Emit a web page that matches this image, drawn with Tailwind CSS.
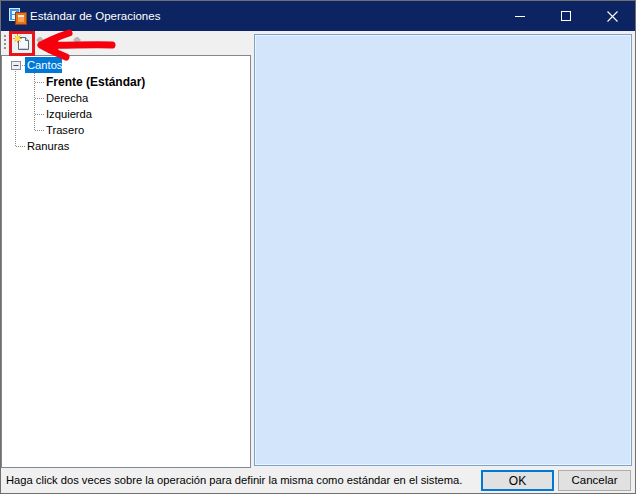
<!DOCTYPE html>
<html lang="es">
<head>
  <meta charset="UTF-8" />
  <title>Estándar de Operaciones</title>
  <script src="https://cdn.jsdelivr.net/npm/@tailwindcss/browser@4"></script>
</head>
<body class="m-0 bg-[#f0f0f0] font-['Liberation_Sans',sans-serif] text-[11.2px] text-black">
  <div class="relative w-[636px] h-[494px] flex flex-col border border-[#6f6f6f] overflow-hidden">
    <!-- Title bar -->
    <header class="h-[30px] shrink-0 bg-[#0c2461] flex items-center text-white">
      <svg class="ml-[8px] w-[18px] h-[18px]" viewBox="0 0 18 18">
        <rect x="0.5" y="1.5" width="10" height="12" fill="#3f9bea" stroke="#cfe8fc"/>
        <rect x="3" y="4" width="4" height="3" fill="#e8f4fe"/>
        <rect x="3" y="8" width="3" height="4" fill="#e8f4fe"/>
        <rect x="6.5" y="5.5" width="11" height="12" fill="#e8701a" stroke="#8a4312"/>
        <rect x="9" y="8" width="6" height="7" fill="#f5a45e"/>
        <rect x="9" y="8" width="6" height="2" fill="#fdeedd"/>
      </svg>
      <span class="ml-[3px] mt-[2px] text-[11.5px] leading-none">Estándar de Operaciones</span>
      <div class="ml-auto flex items-center">
        <div class="w-[46px] h-[30px] flex items-center justify-center">
          <div class="w-[10px] h-px bg-white"></div>
        </div>
        <div class="w-[46px] h-[30px] flex items-center justify-center">
          <div class="w-[10px] h-[10px] border border-white"></div>
        </div>
        <div class="w-[46px] h-[30px] flex items-center justify-center">
          <svg class="w-[11px] h-[11px]" viewBox="0 0 11 11"><path d="M.5.5l10 10M10.5.5l-10 10" stroke="#fff" stroke-width="1.1"/></svg>
        </div>
      </div>
    </header>

    <!-- Main area -->
    <div class="flex-1 flex min-h-0">
      <div class="w-[250px] shrink-0 flex flex-col">
        <!-- Toolbar -->
        <div class="h-[24px] shrink-0 flex items-center pl-[3px]">
          <div class="w-[2px] h-[16px] bg-[repeating-linear-gradient(to_bottom,#8f8f8f_0,#8f8f8f_2px,transparent_2px,transparent_4px)]"></div>
          <svg class="ml-[7px] w-[18px] h-[18px]" viewBox="0 0 18 18">
            <path d="M5.5 3.5h7l3 3v9h-10z" fill="#f4f7fb" stroke="#56697f"/>
            <path d="M12.5 3.5v3h3" fill="#cfd9e6" stroke="#56697f"/>
            <path d="M6.5 14.5h8" stroke="#c4d0de"/>
            <path d="M4.5 0v9M0 4.5h9M1.5 1.5l6 6M7.5 1.5l-6 6" stroke="#f39a12"/>
            <circle cx="4.5" cy="4.5" r="2.5" fill="#fbe04a"/>
          </svg>
          <svg class="ml-[5px] w-[8px] h-[6px] mb-[6px]" viewBox="0 0 8 6"><path d="M0 3l3-3h2l3 3-3 3H3z" fill="#b8b8b8"/></svg>
          <svg class="ml-[29px] w-[8px] h-[6px] mb-[6px]" viewBox="0 0 8 6"><path d="M0 3l3-3h2l3 3-3 3H3z" fill="#b8b8b8"/></svg>
        </div>
        <!-- Tree -->
        <div class="relative flex-1 bg-white border border-[#828790] pt-[1px]">
          <svg class="absolute left-[-1px] top-[-1px] w-[60px] h-[100px]" viewBox="0 0 60 100">
            <path d="M14.5 16v75.5H24M19 10.5h5M33.5 18v57M34 27.5h10M34 43.5h10M34 59.5h10M34 75.5h10" fill="none" stroke="#8a8a8a" stroke-dasharray="1 1"/>
            <rect x="10.5" y="6.5" width="9" height="8" fill="#eef0f3" stroke="#848c99"/>
            <path d="M12.5 10.5h5" stroke="#3c4a5c"/>
          </svg>
          <div class="h-[16px] pl-[23px] flex"><span class="relative w-[37px] pl-[2px] bg-[#0078d7] text-white leading-[16px]">Cantos</span></div>
          <div class="h-[16px] pt-px pl-[44px] leading-[16px] text-[12px] font-bold">Frente (Estándar)</div>
          <div class="h-[16px] pt-px pl-[44px] leading-[16px]">Derecha</div>
          <div class="h-[16px] pt-px pl-[44px] leading-[16px]">Izquierda</div>
          <div class="h-[16px] pt-px pl-[44px] leading-[16px]">Trasero</div>
          <div class="h-[16px] pt-px pl-[25px] leading-[16px]">Ranuras</div>
        </div>
      </div>
      <!-- Right panel -->
      <div class="flex-1 pl-[3px] pr-[3px] pt-[3px] pb-[2px]">
        <div class="h-full border border-[#7da2ce] p-px bg-[#eaf2fc]">
          <div class="h-full bg-[#d3e5fa]"></div>
        </div>
      </div>
    </div>

    <!-- Bottom bar -->
    <footer class="h-[25px] shrink-0 flex items-center pl-[5px] pr-[4px]">
      <span class="flex-1 min-w-0 whitespace-nowrap">Haga click dos veces sobre la operación para definir la misma como estándar en el sistema.</span>
      <button class="w-[73px] h-[21px] border-2 border-[#0078d7] bg-[#e1e1e1] text-[12px] leading-none">OK</button>
      <button class="ml-[4px] w-[73px] h-[21px] border border-[#adadad] bg-[#e1e1e1] text-[11.5px] leading-none">Cancelar</button>
    </footer>

    <!-- Annotation drawn over the window -->
    <svg class="absolute left-[-1px] top-[-1px] w-[130px] h-[70px] pointer-events-none" viewBox="0 0 130 70">
      <rect x="10.5" y="32.5" width="23" height="22" fill="none" stroke="#e8141c" stroke-width="3"/>
      <path d="M41 45C62 46 90 44 112 45M41 45C50 40 60 36 69 33M41 45C49 50 59 54 66 57" fill="none" stroke="#f5000c" stroke-width="7" stroke-linecap="round"/>
      <path d="M37 45L60 35L57 45L60 55Z" fill="#f5000c"/>
    </svg>
  </div>
</body>
</html>
